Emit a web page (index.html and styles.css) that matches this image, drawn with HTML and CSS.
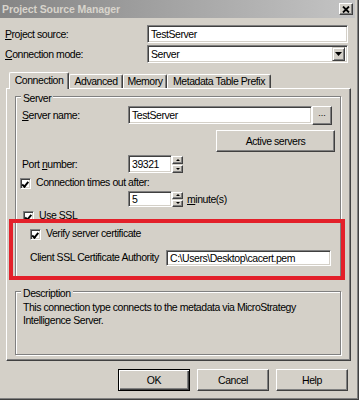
FILE: index.html
```html
<!DOCTYPE html>
<html lang="en">
<head>
  <meta charset="UTF-8">
  <title>Project Source Manager</title>
  <link rel="stylesheet" href="styles.css">
</head>
<body>
<div class="window">
  <div class="titlebar">
    <span class="title">Project Source Manager</span>
    <span class="close-btn">
      <svg width="8" height="7" viewBox="0 0 8 7"><path d="M1 0.5 L7 6.5 M7 0.5 L1 6.5" stroke="#000" stroke-width="1.8" fill="none"/></svg>
    </span>
  </div>

  <div class="content">
    <div class="field-row first-row">
      <label class="field-label"><u>P</u>roject source:</label>
      <div class="edit top-edit">TestServer</div>
    </div>
    <div class="field-row second-row">
      <label class="field-label"><u>C</u>onnection mode:</label>
      <div class="edit top-edit combo">
        <span>Server</span>
        <span class="drop-btn">
          <svg width="7" height="4" viewBox="0 0 7 4"><polygon points="0,0 7,0 3.5,4" fill="#000"/></svg>
        </span>
      </div>
    </div>

    <!-- Tabs -->
    <div class="tabs">
      <span class="tab tab-active">Connection</span>
      <span class="tab tab-adv">Advanced</span>
      <span class="tab tab-mem">Memory</span>
      <span class="tab tab-meta">Metadata Table Prefix</span>
    </div>

    <div class="panel">
      <div class="group server-group">
        <span class="group-title">Server</span>

        <div class="g-row">
          <label class="g-label"><u>S</u>erver name:</label>
          <div class="edit server-edit">TestServer</div>
          <span class="btn browse-btn">...</span>
        </div>

        <div class="btn active-btn">Active servers</div>

        <div class="g-row port-row">
          <label class="g-label">Port <u>n</u>umber:</label>
          <div class="edit spin-edit">39321</div>
          <div class="spin-btns"><span class="spin-up"></span><span class="spin-down"></span></div>
        </div>

        <div class="check-row timeout-row">
          <span class="checkbox checked"></span>
          <span>Connection times out after:</span>
        </div>

        <div class="g-row minutes-row">
          <div class="edit spin-edit small-edit">5</div>
          <div class="spin-btns small-spin"><span class="spin-up"></span><span class="spin-down"></span></div>
          <span class="unit"><u>m</u>inute(s)</span>
        </div>

        <div class="check-row ssl-row">
          <span class="checkbox checked"></span>
          <span>Use SSL</span>
        </div>

        <div class="check-row verify-row">
          <span class="checkbox checked"></span>
          <span>Verify server certificate</span>
        </div>

        <div class="g-row client-row">
          <label class="client-label">Client SSL Certificate Authority</label>
          <div class="edit client-edit">C:\Users\Desktop\cacert.pem</div>
        </div>
      </div>

      <div class="group desc-group">
        <span class="group-title">Description</span>
        <p class="desc-text">This connection type connects to the metadata via MicroStrategy<br>Intelligence Server.</p>
      </div>
    </div>

    <div class="buttons">
      <span class="btn dlg-btn default-btn">OK</span>
      <span class="btn dlg-btn">Cancel</span>
      <span class="btn dlg-btn">Help</span>
    </div>
  </div>

  <!-- annotation box drawn over the dialog -->
  <div class="highlight"></div>
</div>
</body>
</html>
```

FILE: styles.css
```css
* {
  box-sizing: border-box;
}
body {
  margin: 0;
  font-family: "Liberation Sans", Arial, sans-serif;
  font-size: 10.5px;
  letter-spacing: -0.45px;
  line-height: 13px;
  color: #000;
  background: #fff;
}
u {
  text-decoration-thickness: 1px;
  text-underline-offset: 1px;
}
.window {
  position: relative;
  width: 359px;
  height: 400px;
  background: #d4d0c8;
  border-right: 1px solid #404040;
  border-bottom: 1px solid #404040;
  box-shadow: inset -1px -1px #808080;
}

/* title bar */
.titlebar {
  height: 18px;
  margin-right: 3px;
  padding: 0 2px 0 2px;
  display: flex;
  align-items: center;
  justify-content: space-between;
  background: linear-gradient(to right, #858585, #c4c4c4);
}
.title {
  font-weight: bold;
  letter-spacing: -0.1px;
  color: #d8d4cc;
}
.close-btn {
  width: 14px;
  height: 12px;
  display: flex;
  align-items: center;
  justify-content: center;
  background: #d4d0c8;
  border: 1px solid;
  border-color: #fff #404040 #404040 #fff;
  box-shadow: inset -1px -1px #808080;
}

.content {
  padding: 0 6px 0 5px;
}

/* sunken edit boxes */
.edit {
  background: #fff;
  border: 1px solid;
  border-color: #808080 #fff #fff #808080;
  box-shadow: inset 1px 1px #404040, inset -1px -1px #d4d0c8;
  padding: 0 3px;
  display: flex;
  align-items: center;
  white-space: nowrap;
}

/* raised buttons */
.btn {
  display: flex;
  align-items: center;
  justify-content: center;
  background: #d4d0c8;
  border: 1px solid;
  border-color: #fff #404040 #404040 #fff;
  box-shadow: inset -1px -1px #808080;
}

.field-row {
  display: flex;
  align-items: center;
}
.first-row {
  margin-top: 7px;
}
.second-row {
  margin-top: 2px;
}
.field-label {
  width: 142px;
}
.top-edit {
  width: 201px;
  height: 18px;
}
.combo {
  justify-content: space-between;
  padding-right: 2px;
}
.drop-btn {
  width: 13px;
  height: 14px;
  display: flex;
  align-items: center;
  justify-content: center;
  border: 1px solid;
  border-color: #d4d0c8 #404040 #404040 #d4d0c8;
  box-shadow: inset 1px 1px #fff, inset -1px -1px #808080;
  background: #d4d0c8;
}

/* tabs */
.tabs {
  margin-top: 9px;
  height: 16px;
  padding-left: 4px;
  display: flex;
  align-items: flex-end;
}
.tab {
  height: 14px;
  display: flex;
  align-items: center;
  justify-content: center;
  border-top: 1px solid #fff;
  border-left: 1px solid #fff;
  border-right: 1px solid #404040;
  box-shadow: inset -1px 0 #808080;
  border-radius: 2px 2px 0 0;
  position: relative;
}
.tab-active {
  width: 60px;
  height: 17px;
  margin-bottom: -1px;
  background: #d4d0c8;
  z-index: 1;
  padding-bottom: 1px;
}
.tab-adv {
  width: 54px;
}
.tab-mem {
  width: 44px;
}
.tab-meta {
  width: 104px;
}

.panel {
  margin-left: 1px;
  width: 345px;
  height: 273px;
  border: 1px solid;
  border-color: #fff #404040 #404040 #fff;
  box-shadow: inset -1px -1px #808080;
}

/* group boxes */
.group {
  position: relative;
  margin-left: 8px;
  width: 326px;
  border: 1px solid #808080;
  box-shadow: inset 1px 1px #fff, 1px 1px #fff;
}
.group-title {
  position: absolute;
  top: -5px;
  left: 5px;
  padding: 0 2px;
  background: #d4d0c8;
}
.server-group {
  margin-top: 7px;
  height: 183px;
  padding: 8px 0 0 6px;
}
.desc-group {
  margin-top: 12px;
  height: 64px;
  padding: 9px 0 0 7px;
}
.desc-text {
  margin: 0;
}

.g-row {
  display: flex;
  align-items: center;
}
.g-label {
  width: 106px;
}
.server-edit {
  width: 184px;
  height: 18px;
}
.browse-btn {
  width: 20px;
  height: 19px;
  margin-top: 1px;
  letter-spacing: 0;
  font-size: 9px;
  align-items: flex-end;
  padding-bottom: 4px;
}
.active-btn {
  margin: 5px 0 0 194px;
  width: 119px;
  height: 22px;
}
.port-row {
  margin-top: 3px;
}
.spin-edit {
  width: 44px;
  height: 18px;
}
.spin-btns {
  width: 11px;
  height: 18px;
  display: flex;
  flex-direction: column;
  justify-content: center;
  gap: 1px;
}
.spin-up,
.spin-down {
  height: 8px;
  display: flex;
  align-items: center;
  justify-content: center;
  background: #d4d0c8;
  border: 1px solid;
  border-color: #fff #404040 #404040 #fff;
  box-shadow: inset -1px -1px #808080;
}
.spin-up::after {
  content: "";
  border-left: 2px solid transparent;
  border-right: 2px solid transparent;
  border-bottom: 2px solid #000;
}
.spin-down::after {
  content: "";
  border-left: 2px solid transparent;
  border-right: 2px solid transparent;
  border-top: 2px solid #000;
}

.check-row {
  display: flex;
  align-items: center;
  gap: 5px;
  height: 11px;
}
.check-row span:last-child {
  margin-top: -2px;
}
.checkbox {
  width: 11px;
  height: 11px;
  flex: none;
  background: #fff;
  border: 1px solid;
  border-color: #808080 #fff #fff #808080;
  box-shadow: inset 1px 1px #404040, inset -1px -1px #d4d0c8;
  position: relative;
}
.checked::after {
  content: "";
  position: absolute;
  left: 2px;
  top: 1px;
  width: 2px;
  height: 5px;
  border-right: 2px solid #000;
  border-bottom: 2px solid #000;
  transform: rotate(40deg);
  transform-origin: 0 0;
  margin-left: 3px;
}
.checkbox.checked {
  margin-top: 0;
}
.timeout-row {
  margin: 5px 0 0 -2px;
}
.minutes-row {
  margin: 2px 0 0 106px;
}
.small-edit {
  height: 16px;
}
.small-spin {
  height: 16px;
}
.small-spin .spin-up,
.small-spin .spin-down {
  height: 7px;
}
.unit {
  margin-left: 4px;
}
.ssl-row {
  margin: 4px 0 0 1px;
}
.verify-row {
  margin: 7px 0 0 8px;
}
.client-row {
  margin: 10px 0 0 8px;
}
.client-label {
  width: 136px;
  margin-top: -2px;
}
.client-edit {
  width: 165px;
  height: 16px;
}

/* dialog buttons */
.buttons {
  margin-top: 8px;
  padding-right: 4px;
  display: flex;
  justify-content: flex-end;
  gap: 7px;
}
.dlg-btn {
  width: 72px;
  height: 22px;
}
.default-btn {
  border: 1px solid #000;
  box-shadow: inset 1px 1px #fff, inset -1px -1px #404040, inset -2px -2px #808080;
}

.highlight {
  position: absolute;
  left: 9px;
  top: 219px;
  width: 336px;
  height: 61px;
  border: 4px solid #e3202a;
}
```
